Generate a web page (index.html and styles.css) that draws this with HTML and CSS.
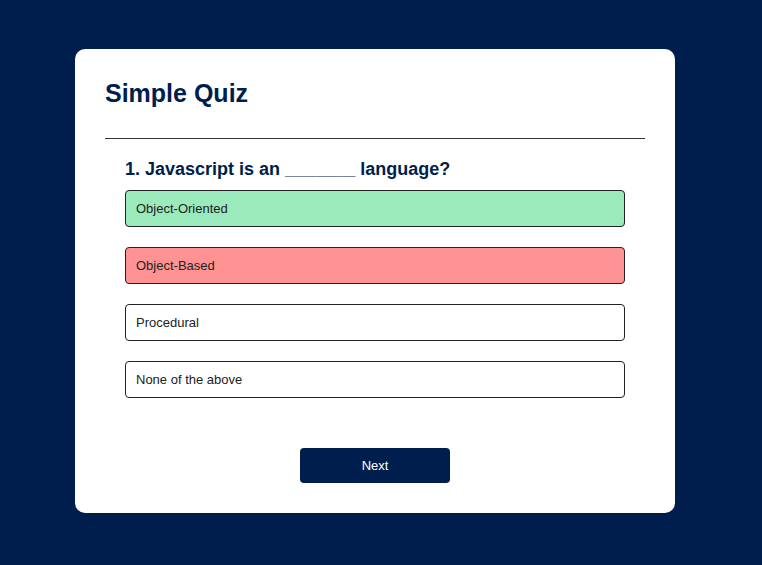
FILE: index.html
```html
<!DOCTYPE html>
<html>
<head>
<meta charset="utf-8">
<link rel="stylesheet" href="styles.css">
</head>
<body>
<div class="app">
  <h1 class="title">Simple Quiz</h1>
  <div class="quiz">
    <h2 class="question">1. Javascript is an _______ language?</h2>
    <div class="answers">
      <button class="btn correct">Object-Oriented</button>
      <button class="btn incorrect">Object-Based</button>
      <button class="btn">Procedural</button>
      <button class="btn">None of the above</button>
    </div>
    <button class="next-btn">Next</button>
  </div>
</div>
</body>
</html>
```
FILE: styles.css
```css
* { margin: 0; padding: 0; box-sizing: border-box; }
body {
  background: #001e4d;
  font-family: "Liberation Sans", Arial, sans-serif;
  padding: 49px 12px 0 0;
}
.app {
  background: #fff;
  width: 600px;
  margin: 0 auto;
  border-radius: 10px;
  padding: 30px;
}
.title {
  color: #001e4d;
  font-size: 25px;
  font-weight: 700;
  line-height: 29px;
  padding-bottom: 30px;
  border-bottom: 1px solid #333;
}
.quiz {
  padding: 20px 20px 0;
  display: flex;
  flex-direction: column;
}
.question {
  color: #001e4d;
  font-size: 18px;
  font-weight: 700;
  line-height: 21px;
}
.answers {
  display: flex;
  flex-direction: column;
  gap: 20px;
  margin-top: 10px;
}
.btn {
  background: #fff;
  color: #222;
  font-family: "Liberation Sans", Arial, sans-serif;
  font-size: 13px;
  line-height: 15px;
  text-align: left;
  padding: 10px;
  border: 1px solid #222;
  border-radius: 4px;
  width: 100%;
}
.btn.correct { background: #9aeabc; }
.btn.incorrect { background: #ff9393; }
.next-btn {
  background: #001e4d;
  color: #fff;
  font-family: "Liberation Sans", Arial, sans-serif;
  font-size: 13px;
  width: 150px;
  height: 35px;
  border: none;
  border-radius: 4px;
  margin: 50px auto 0;
}
```
